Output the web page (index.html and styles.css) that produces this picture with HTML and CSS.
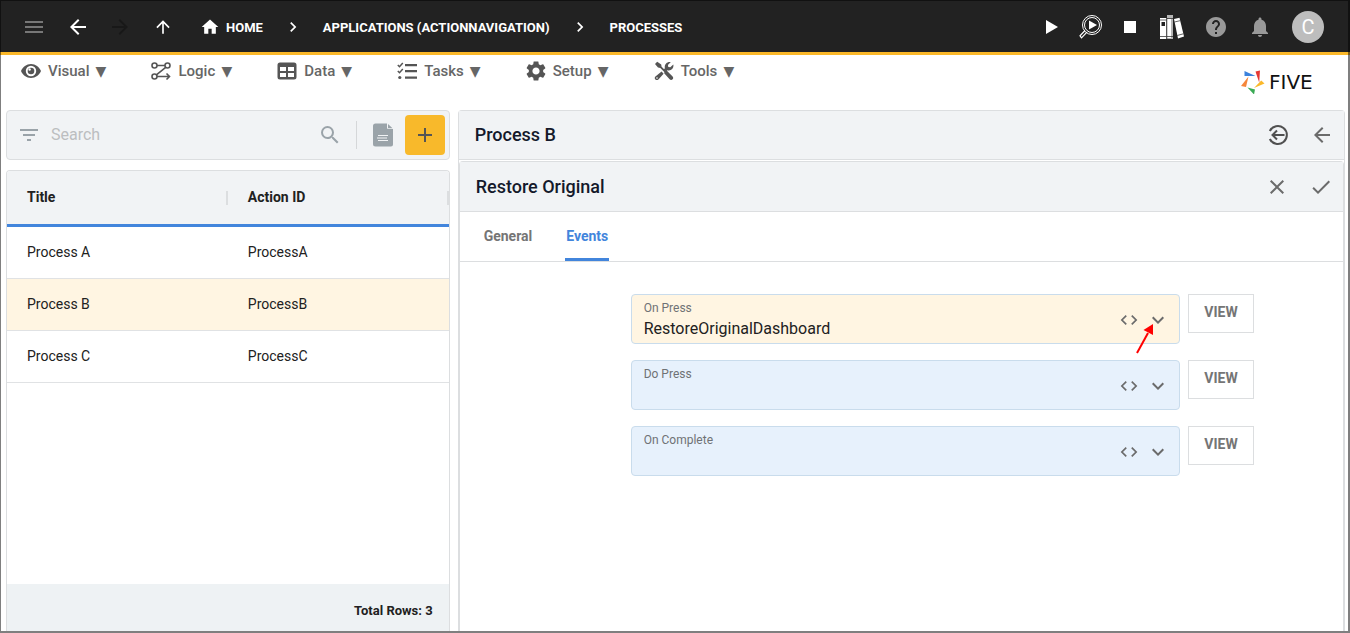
FILE: index.html
```html
<!DOCTYPE html>
<html lang="en">
<head>
<meta charset="utf-8">
<title>Five - Processes</title>
<link rel="stylesheet" href="styles.css">
</head>
<body>
<header class="topbar">
  <div class="history">
    <button class="icon-btn muted" aria-label="Menu"><svg viewBox="0 0 24 24"><path d="M3 18h18v-2H3v2zm0-5h18v-2H3v2zm0-7v2h18V6H3z"/></svg></button>
    <button class="icon-btn" aria-label="Back"><svg viewBox="0 0 24 24"><path d="M20 11H7.830l5.590-5.590L12 4l-8 8 8 8 1.410-1.410L7.830 13H20v-2z"/></svg></button>
    <button class="icon-btn faded" aria-label="Forward"><svg viewBox="0 0 24 24"><path d="M12 4l-1.410 1.410L16.170 11H4v2h12.170l-5.580 5.590L12 20l8-8z"/></svg></button>
    <button class="icon-btn small" aria-label="Up"><svg viewBox="0 0 24 24"><path d="M4 12l1.410 1.410L11 7.830V20h2V7.830l5.580 5.590L20 12l-8-8-8 8z"/></svg></button>
  </div>
  <nav class="crumbs" aria-label="Breadcrumb">
    <a href="#" class="home"><svg viewBox="0 0 24 24"><path d="M10 20v-6h4v6h5v-8h3L12 3 2 12h3v8z"/></svg>HOME</a>
    <svg viewBox="0 0 24 24"><path d="M10 6L8.590 7.410 13.170 12l-4.580 4.590L10 18l6-6z"/></svg>
    <a href="#">APPLICATIONS (ACTIONNAVIGATION)</a>
    <svg viewBox="0 0 24 24"><path d="M10 6L8.590 7.410 13.170 12l-4.580 4.590L10 18l6-6z"/></svg>
    <a href="#">PROCESSES</a>
  </nav>
  <div class="run-tools">
    <button class="icon-btn" aria-label="Run"><svg viewBox="0 0 24 24"><path d="M8 5v14l12-7z"/></svg></button>
    <button class="icon-btn" aria-label="Inspect"><svg viewBox="0 0 24 24" fill="none" stroke="#fff"><circle cx="14" cy="10" r="9.500" stroke-width="1"/><circle cx="14" cy="10" r="7.500" stroke-width="1"/><path d="M7 15.500l-5 5.300 1.500 2 5.500-5.600" stroke-width="1.200"/><path d="M11 5.500v9l8-4.500z" fill="#fff" stroke="none"/></svg></button>
    <button class="icon-btn" aria-label="Stop"><svg viewBox="0 0 24 24"><path d="M6 6h12v12H6z"/></svg></button>
  </div>
  <div class="user-tools">
    <button class="icon-btn" aria-label="Library"><svg viewBox="0 0 24 24"><path d="M0 3h6.500v21H0z"/><path d="M7 0h6v24H7z" fill="#b5b5b5"/><path d="M7 4h4v19H7z" fill="#fff"/><path d="M14 4l5.500-1.300L24 21.500l-6 2z"/><path d="M1.500 7h3.500v4H1.500z" fill="#222"/><path d="M0 5h6.500M0 21.500h6.500M7 3.500h6M7 21.500h6M14.500 7l5.500-1.300M17.300 20.500l6-1.700M6.800 3v21M13.500 4v19" stroke="#222" fill="none" stroke-width=".7"/></svg></button>
    <button class="icon-btn gray" aria-label="Help"><svg viewBox="0 0 24 24"><path d="M12 2C6.480 2 2 6.480 2 12s4.480 10 10 10 10-4.480 10-10S17.520 2 12 2zm1 17h-2v-2h2v2zm2.070-7.750l-.9.920C13.450 12.900 13 13.500 13 15h-2v-.5c0-1.100.45-2.100 1.170-2.830l1.240-1.260c.37-.36.59-.86.59-1.410 0-1.100-.9-2-2-2s-2 .9-2 2H8c0-2.210 1.790-4 4-4s4 1.790 4 4c0 .88-.36 1.680-.93 2.250z"/></svg></button>
    <button class="icon-btn gray" aria-label="Notifications"><svg viewBox="0 0 24 24"><path d="M12 22c1.100 0 2-.9 2-2h-4c0 1.100.89 2 2 2zm6-6v-5c0-3.070-1.640-5.640-4.500-6.320V4c0-.83-.67-1.500-1.500-1.500s-1.500.67-1.500 1.500v.68C7.630 5.360 6 7.920 6 11v5l-2 2v1h16v-1l-2-2z"/></svg></button>
    <button class="avatar" aria-label="Account">C</button>
  </div>
</header>

<div class="menubar">
  <nav class="menus">
    <button class="menu"><svg viewBox="0 0 20 20"><path d="M10 3C5.500 3 1.700 5.900 0 10c1.700 4.100 5.500 7 10 7s8.300-2.900 10-7c-1.700-4.100-5.500-7-10-7zm0 12.200A5.200 5.200 0 1 1 10 4.800a5.200 5.200 0 0 1 0 10.400z"/><circle cx="10" cy="10" r="3.300"/><circle cx="8.600" cy="8.500" r="1.200" fill="#fff"/></svg><span>Visual</span><i>▼</i></button>
    <button class="menu"><svg viewBox="0 0 20 20" fill="none" stroke="#555" stroke-width="1.600"><circle cx="3.500" cy="4.500" r="2.500"/><circle cx="16.500" cy="4.500" r="2.500"/><circle cx="3.500" cy="15.500" r="2.500"/><path d="M6 4.500h8M14.700 6.300l-9.300 7.500M6 15.500h12M15.500 12.500l3 3-3 3"/></svg><span>Logic</span><i>▼</i></button>
    <button class="menu"><svg viewBox="0 0 20 20"><path d="M3 1.500h14a2.500 2.500 0 0 1 2.500 2.500v12a2.500 2.500 0 0 1-2.500 2.500H3A2.500 2.500 0 0 1 .5 16V4A2.500 2.500 0 0 1 3 1.500zM3 6v4h6V6zm8 0v4h6V6zM3 12v4h6v-4zm8 0v4h6v-4z" fill-rule="evenodd"/></svg><span>Data</span><i>▼</i></button>
    <button class="menu"><svg viewBox="0 0 20 20"><path d="M8 3h12v2.200H8zM8 9h12v2.200H8zM8 15.500h12v2.200H8z"/><circle cx="2.800" cy="16.500" r="1.600"/><path d="M.8 4l1.700 1.700L5.800 2M.8 10l1.700 1.700L5.800 8" fill="none" stroke="#555" stroke-width="1.500"/></svg><span>Tasks</span><i>▼</i></button>
    <button class="menu"><svg viewBox="2 2 20 20"><path d="M19.140 12.940c.04-.3.060-.61.060-.94 0-.32-.02-.64-.07-.94l2.030-1.580c.18-.14.23-.41.120-.61l-1.920-3.320c-.12-.22-.37-.29-.59-.22l-2.390.96c-.5-.38-1.030-.7-1.620-.94l-.36-2.540c-.04-.24-.24-.41-.48-.41h-3.840c-.24 0-.43.17-.47.410l-.36 2.540c-.59.240-1.130.570-1.620.940l-2.390-.96c-.22-.08-.47 0-.59.220L2.740 8.870c-.12.210-.08.470.120.610l2.030 1.580c-.05.300-.09.630-.09.940s.02.640.070.940l-2.030 1.580c-.18.140-.23.410-.12.610l1.920 3.320c.12.220.37.290.59.220l2.390-.96c.5.380 1.030.700 1.620.940l.36 2.540c.05.240.24.410.48.410h3.840c.24 0 .44-.17.470-.41l.36-2.540c.59-.24 1.130-.56 1.620-.94l2.390.96c.22.080.47 0 .59-.22l1.920-3.320c.12-.22.070-.47-.12-.61l-2.010-1.580zM12 15.600c-1.980 0-3.600-1.620-3.600-3.600s1.620-3.600 3.600-3.600 3.600 1.620 3.600 3.600-1.620 3.600-3.600 3.600z"/></svg><span>Setup</span><i>▼</i></button>
    <button class="menu"><svg viewBox="0 0 20 20"><path d="M3.200.8l4 2.700.4 2.300 4 4 1-.2 6 5.800c.8.900.8 2 0 2.900s-2.200.8-3 0l-5.400-6 .1-1.200-4-4-2.300-.5L1 2.900z"/><path d="M16.800 1l-2.900 2.900.4 2 2 .4 3-2.800c.8 3.400-1.500 6.400-5 6l-.8-.3-1.500 1.400-2.300-2.200 1.200-1.200C10 3.500 13 .2 16.800 1zM7.600 10.500l2 2.200-5.200 5.700c-1 .9-2.100.9-3 0s-.9-2 0-2.900z"/><circle cx="3" cy="17" r=".8" fill="#fff"/></svg><span>Tools</span><i>▼</i></button>
  </nav>
  <a href="#" class="brand">
    <svg viewBox="0 0 24 24"><path d="M3.500 1v5h11z" fill="#3c82dc"/><path d="M14.500 1.500L19 .5l-.8 12z" fill="#e53935"/><path d="M23.500 13.500L13 18l7.200-7.500z" fill="#fbb829"/><path d="M6.500 17.500l7.500 2-1 5z" fill="#3aaa55"/><path d="M7.500 6.500L5 17l-5-1z" fill="#f5863a"/></svg>
    <span>FIVE</span>
  </a>
</div>

<main class="workspace">
  <section class="list-pane">
    <div class="searchbar">
      <button class="icon-btn filter" aria-label="Filter"><svg viewBox="0 0 24 24"><path d="M10 18h4v-2h-4v2zM3 6v2h18V6H3zm3 7h12v-2H6v2z"/></svg></button>
      <input type="text" placeholder="Search" aria-label="Search">
      <button class="icon-btn filter" aria-label="Run search"><svg viewBox="0 0 24 24"><path d="M15.500 14h-.79l-.28-.27A6.470 6.470 0 0 0 16 9.500 6.500 6.500 0 1 0 9.500 16c1.610 0 3.090-.59 4.230-1.570l.27.28v.79l5 4.990L20.490 19l-4.990-5zm-6 0C7.010 14 5 11.990 5 9.500S7.010 5 9.500 5 14 7.010 14 9.500 11.990 14 9.500 14z"/></svg></button>
      <span class="divider"></span>
      <button class="icon-btn filter" aria-label="Report"><svg viewBox="0 0 24 24"><path d="M4.500.5h11.500v4.300a1.200 1.200 0 0 0 1.200 1.200H22v15.500a2 2 0 0 1-2 2H4.500a2.500 2.500 0 0 1-2.500-2.500V3A2.500 2.500 0 0 1 4.500.5z"/><path d="M17 1l4.500 4.200H17z"/><path d="M7 12.500h10M6 15h10M7 17.500h10" stroke="#f1f3f5" stroke-width="1.100"/></svg></button>
      <button class="add" aria-label="Add"><svg viewBox="0 0 24 24"><path d="M19 13h-6v6h-2v-6H5v-2h6V5h2v6h6v2z"/></svg></button>
    </div>
    <div class="grid-card">
      <table>
        <thead><tr><th>Title</th><th>Action ID</th></tr></thead>
        <tbody>
          <tr><td>Process A</td><td>ProcessA</td></tr>
          <tr class="selected"><td>Process B</td><td>ProcessB</td></tr>
          <tr><td>Process C</td><td>ProcessC</td></tr>
        </tbody>
      </table>
      <div class="totals">Total Rows: 3</div>
    </div>
  </section>

  <section class="detail-pane">
    <div class="pane-head">
      <h1>Process B</h1>
      <button class="icon-btn dark" aria-label="Return"><svg viewBox="0 0 24 24" fill="none" stroke="#505050" stroke-width="2"><path d="M3.800 8a9 9 0 1 1 0 8M18.500 12H7M11 7.500L6.500 12l4.500 4.500"/></svg></button>
      <button class="icon-btn dark" aria-label="Back to list"><svg viewBox="0 0 24 24"><path d="M20 11H7.830l5.590-5.590L12 4l-8 8 8 8 1.410-1.410L7.830 13H20v-2z"/></svg></button>
    </div>
    <div class="sub-card">
      <div class="pane-head">
        <h2>Restore Original</h2>
        <button class="icon-btn dark" aria-label="Cancel"><svg viewBox="0 0 24 24"><path d="M19 6.410L17.590 5 12 10.590 6.410 5 5 6.410 10.590 12 5 17.590 6.410 19 12 13.410 17.590 19 19 17.590 13.410 12z"/></svg></button>
        <button class="icon-btn dark" aria-label="Save"><svg viewBox="0 0 24 24"><path d="M9 16.170L4.830 12l-1.420 1.410L9 19 21 7l-1.410-1.410z"/></svg></button>
      </div>
      <div class="tabs" role="tablist">
        <button role="tab">General</button>
        <button role="tab" class="active" aria-selected="true">Events</button>
      </div>
      <form class="fields">
        <div class="field-row">
          <div class="field filled">
            <div class="field-text"><label for="on-press">On Press</label><select id="on-press"><option>RestoreOriginalDashboard</option></select></div>
            <button type="button" class="code" aria-label="Edit code"><svg viewBox="0 0 24 24"><path d="M9.400 16.600L4.800 12l4.600-4.600L8 6l-6 6 6 6 1.400-1.400zm5.200 0l4.600-4.600-4.600-4.600L16 6l6 6-6 6-1.400-1.400z"/></svg></button>
            <svg class="caret" viewBox="0 0 24 24"><path d="M16.590 8.590L12 13.170 7.410 8.590 6 10l6 6 6-6z"/></svg>
            <svg class="pointer" viewBox="0 0 18 30"><path d="M1 29L12 9" stroke="#f00" stroke-width="2"/><path d="M17 0v11L7.500 6z" fill="#f00"/></svg>
          </div>
          <button type="button" class="view">VIEW</button>
        </div>
        <div class="field-row">
          <div class="field">
            <div class="field-text"><label for="do-press">Do Press</label><select id="do-press"><option></option></select></div>
            <button type="button" class="code" aria-label="Edit code"><svg viewBox="0 0 24 24"><path d="M9.400 16.600L4.800 12l4.600-4.600L8 6l-6 6 6 6 1.400-1.400zm5.200 0l4.600-4.600-4.600-4.600L16 6l6 6-6 6-1.400-1.400z"/></svg></button>
            <svg class="caret" viewBox="0 0 24 24"><path d="M16.590 8.590L12 13.170 7.410 8.590 6 10l6 6 6-6z"/></svg>
          </div>
          <button type="button" class="view">VIEW</button>
        </div>
        <div class="field-row">
          <div class="field">
            <div class="field-text"><label for="on-complete">On Complete</label><select id="on-complete"><option></option></select></div>
            <button type="button" class="code" aria-label="Edit code"><svg viewBox="0 0 24 24"><path d="M9.400 16.600L4.800 12l4.600-4.600L8 6l-6 6 6 6 1.400-1.400zm5.200 0l4.600-4.600-4.600-4.600L16 6l6 6-6 6-1.400-1.400z"/></svg></button>
            <svg class="caret" viewBox="0 0 24 24"><path d="M16.590 8.590L12 13.170 7.410 8.590 6 10l6 6 6-6z"/></svg>
          </div>
          <button type="button" class="view">VIEW</button>
        </div>
      </form>
    </div>
  </section>
</main>
</body>
</html>
```

FILE: styles.css
```css
* { box-sizing: border-box; }

body {
  margin: 0;
  min-height: 100vh;
  display: flex;
  flex-direction: column;
  background: #fff;
  color: #212121;
  font-family: Roboto, "Liberation Sans", sans-serif;
  font-size: 14px;
}

/* window frame */
body::after {
  content: "";
  position: fixed;
  inset: 0;
  border: 1px solid rgba(0, 0, 0, 0.5);
  border-right-width: 2px;
  border-bottom-width: 2px;
  pointer-events: none;
}

button, input, select { font: inherit; color: inherit; }
button { border: 0; padding: 0; background: none; cursor: pointer; }
a { color: inherit; text-decoration: none; }
svg { display: block; fill: currentColor; flex: none; }
svg[fill="none"] { fill: none; }

.icon-btn svg { width: 24px; height: 24px; }
.muted { color: #777; }
.faded { color: #181818; }
.gray { color: #999; }
.dark { color: #6b6b6b; }
.filter { color: #9aa3a9; }

.topbar {
  display: flex;
  align-items: center;
  height: 55px;
  padding: 2px 26px 0 22px;
  background: #222;
  border-bottom: 3px solid #fbb829;
  color: #fff;
}
.history { display: flex; align-items: center; gap: 20px; margin-right: 27px; }
.history .icon-btn { margin-right: -2px; }
.history .icon-btn:first-child { margin-right: 0; }
.history .small { margin: 0 0 0 3px; }
.history .small svg { width: 20px; height: 20px; }
.crumbs { display: flex; align-items: center; gap: 20px; flex: 1; font-size: 13px; font-weight: 700; }
.crumbs svg { width: 20px; height: 20px; }
.home { display: flex; align-items: center; gap: 6px; }
.run-tools { display: flex; gap: 16px; margin-right: 18px; }
.user-tools { display: flex; align-items: center; gap: 20px; }
.avatar {
  width: 32px;
  height: 32px;
  border-radius: 50%;
  background: #bdbdbd;
  color: #fff;
  font-size: 20px;
  line-height: 32px;
}

.menubar {
  display: flex;
  justify-content: space-between;
  height: 55px;
  padding: 5px 21px 0;
  color: #666;
}
.menus { display: flex; align-items: flex-start; gap: 44px; }
.menu { display: flex; align-items: center; gap: 7px; height: 22px; font-size: 15px; font-weight: 500; }
.menu svg { width: 20px; height: 20px; color: #555; }
.menu i {
  width: 13px;
  margin-left: -2px;
  font-family: "DejaVu Sans", sans-serif;
  font-size: 14px;
  line-height: 20px;
  font-style: normal;
}
.brand { display: flex; align-items: center; gap: 4px; height: 44px; width: 88px; color: #111; }
.brand svg { width: 24px; height: 24px; }
.brand span { font-family: "DejaVu Sans", sans-serif; font-size: 20px; line-height: 24px; }

.workspace {
  flex: 1;
  display: grid;
  grid-template-columns: minmax(0, 1fr) minmax(0, 2fr);
  gap: 8px;
  padding: 0 5px 2px 6px;
}

.list-pane { display: flex; flex-direction: column; gap: 10px; }
.searchbar {
  display: flex;
  align-items: center;
  height: 50px;
  padding: 0 4px 0 10px;
  background: #f1f3f5;
  border: 1px solid #dcdee0;
  border-radius: 4px;
}
.searchbar input {
  flex: 1;
  min-width: 0;
  margin-left: 10px;
  padding: 0 0 2px;
  border: 0;
  outline: 0;
  background: none;
  font-size: 16px;
}
.searchbar input::placeholder { color: #bcbec0; opacity: 1; }
.searchbar .divider { width: 1px; height: 28px; margin: 0 14px; background: #d5d7d9; }
.searchbar .add {
  display: grid;
  place-items: center;
  width: 40px;
  height: 40px;
  margin-left: 10px;
  border-radius: 4px;
  background: #f8b92b;
  color: #555;
}
.add svg { width: 24px; height: 24px; }

.grid-card {
  flex: 1;
  display: flex;
  flex-direction: column;
  justify-content: space-between;
  border: 1px solid #dcdee0;
  border-bottom: 0;
  border-radius: 4px 4px 0 0;
  overflow: hidden;
}
table { width: 100%; border-collapse: separate; border-spacing: 0; table-layout: fixed; }
th, td { padding: 0 20px 2px; text-align: left; }
th {
  height: 56px;
  font-weight: 700;
  background: linear-gradient(#dcdee0, #dcdee0) right center / 2px 14px no-repeat #f1f3f5;
  border-bottom: 3px solid #4285dc;
}
td { height: 52px; border-bottom: 1px solid #e0e2e4; }
.selected td { background: #fff5e2; }
.totals {
  height: 47px;
  padding: 0 16px;
  background: #eef2f4;
  font-size: 13px;
  font-weight: 700;
  line-height: 53px;
  text-align: right;
}

.detail-pane {
  display: flex;
  flex-direction: column;
  gap: 1px;
  border: 1px solid #dcdee0;
  border-bottom: 0;
  border-radius: 4px 4px 0 0;
}
.pane-head {
  display: flex;
  align-items: center;
  gap: 20px;
  height: 49px;
  padding: 0 10px 0 16px;
  background: #f1f3f5;
  border-bottom: 1px solid #dcdee0;
}
.pane-head h1, .pane-head h2 {
  flex: 1;
  margin: 0;
  color: #14192b;
  font-size: 18px;
  font-weight: 500;
  line-height: 22px;
}
.sub-card {
  flex: 1;
  border: 1px solid #dcdee0;
  border-bottom: 0;
  border-radius: 4px 4px 0 0;
}
.sub-card .pane-head { height: 50px; }

.tabs { display: flex; gap: 32px; height: 50px; padding: 0 23px; border-bottom: 1px solid #dcdee0; }
.tabs button {
  padding: 2px 1px 0;
  border-bottom: 3px solid transparent;
  border-radius: 2px 2px 0 0;
  color: #757575;
  font-weight: 700;
}
.tabs .active { color: #4285dc; border-bottom-color: #4285dc; }

.fields { display: flex; flex-direction: column; gap: 16px; padding: 32px 89px 32px 171px; }
.field-row { display: flex; align-items: flex-start; gap: 8px; }
.field {
  position: relative;
  flex: 1;
  display: flex;
  align-items: center;
  height: 50px;
  padding: 2px 9px 0 12px;
  background: #e7f1fc;
  border: 1px solid #c9dcec;
  border-radius: 4px;
}
.filled { background: #fff5e2; }
.field-text { flex: 1; display: flex; flex-direction: column; height: 40px; }
.field-text label { color: #6f7275; font-size: 12px; line-height: 16px; }
.field-text select {
  appearance: none;
  height: 26px;
  padding: 0;
  border: 0;
  outline: 0;
  background: none;
  font-size: 16px;
}
.code { margin-right: 7px; color: #6b6b6b; }
.code svg { width: 20px; height: 20px; }
.caret { width: 24px; height: 24px; color: #6b6b6b; }
.pointer { position: absolute; right: 25px; top: 29px; width: 18px; height: 30px; }
.view {
  width: 66px;
  height: 39px;
  padding-bottom: 3px;
  border: 1px solid #dcdee0;
  background: #fff;
  color: #757575;
  font-weight: 700;
}
```
